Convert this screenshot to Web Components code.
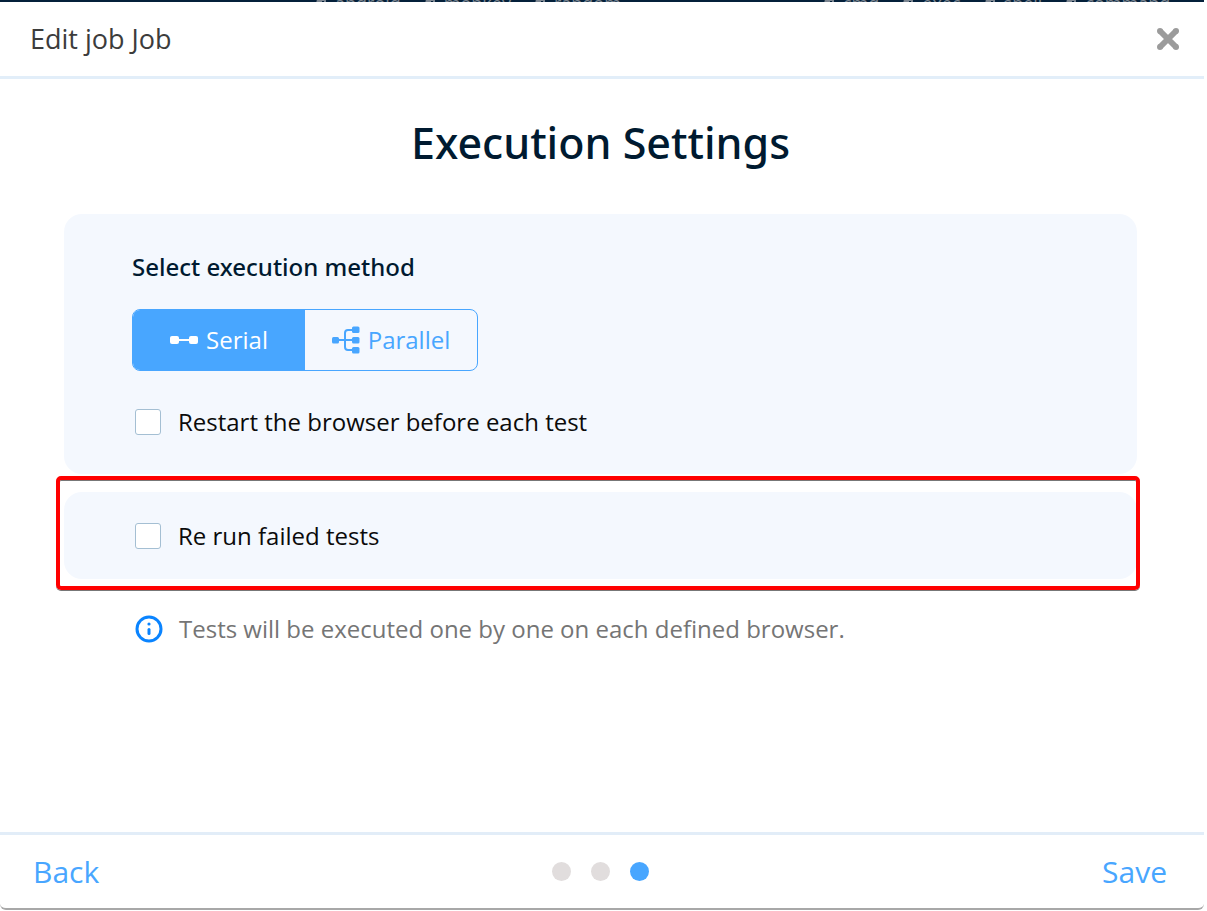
<!DOCTYPE html>
<html lang="en">
<head>
<meta charset="utf-8">
<meta name="viewport" content="width=device-width, initial-scale=1">
<title>Edit job</title>
<style>
  html, body { margin: 0; height: 100%; }
  body { font-family: "Open Sans", "Noto Sans", sans-serif; background: #fff; color: #0b0b0b; }
</style>
</head>
<body>
<job-page></job-page>
<script>
const define = (name, html, setup) => customElements.define(name, class extends HTMLElement {
  constructor() {
    super();
    const root = this.attachShadow({ mode: "open" });
    const t = document.createElement("template");
    t.innerHTML = html;
    root.append(t.content.cloneNode(true));
  }
  connectedCallback() { if (setup) setup(this.shadowRoot, this); }
});

define("tag-item", `
<style>
  :host { display: flex; align-items: flex-start; gap: 9px; }
  svg { width: 10px; height: 12px; margin-top: 8px; }
</style>
<svg viewBox="0 0 10 12" aria-hidden="true"><path d="M3 0h7v12H8V2H6v10H4V6a3 3 0 0 1-1-6z" fill="currentColor"/></svg><slot></slot>`);

define("tag-strip", `
<style>
  :host { display: grid; grid-template-columns: 508fr 380fr; height: 2px; overflow: hidden;
    background: #04203a; color: #7c8691; font-size: 18px; line-height: 24px; padding-left: 316px; }
  div { display: flex; gap: 24px; margin-top: -9px; }
</style>
<div><tag-item>android</tag-item><tag-item>monkey</tag-item><tag-item>random</tag-item></div>
<div><tag-item>cmd</tag-item><tag-item>exec</tag-item><tag-item>shell</tag-item><tag-item>command</tag-item></div>`);

define("modal-header", `
<style>
  :host { display: flex; align-items: center; justify-content: space-between; height: 74px;
    padding: 0 24px 0 30px; border-bottom: 3px solid #e2eef9; color: #3c3c3c; font-size: 27px; line-height: 36px; }
  h1 { margin: 0; font: inherit; }
  button { display: flex; padding: 0; border: 0; background: none; cursor: pointer; }
  svg { width: 24px; height: 24px; }
</style>
<h1><slot></slot></h1>
<button type="button" aria-label="Close"><svg viewBox="0 0 24 24"><path d="M4 4L20 20M20 4L4 20" stroke="#9b9b9b" stroke-width="6" stroke-linecap="butt" fill="none"/><path d="M4 4h.01M20 4h.01M4 20h.01M20 20h.01" stroke="#9b9b9b" stroke-width="6" stroke-linecap="round"/></svg></button>`);

define("check-field", `
<style>
  :host { display: block; font-size: 24px; line-height: 32px; }
  label { display: flex; align-items: center; gap: 17px; }
  input { appearance: none; box-sizing: border-box; width: 26px; height: 26px; margin: 0 0 0 3px;
    border: 1px solid #a4bfd3; border-radius: 3px; background: #fff; }
  input:checked { background: #48a6ff; }
</style>
<label><input type="checkbox"><span><slot></slot></span></label>`);

define("method-option", `
<style>
  :host { display: flex; flex: 1; }
  button { display: flex; flex: 1; align-items: center; justify-content: center; gap: 8px; padding: 0;
    border: 0; background: none; color: #48a6ff; font: inherit; cursor: pointer; }
  :host([active]) button { background: #48a6ff; color: #fff; }
</style>
<button type="button"><slot name="icon"></slot><slot></slot></button>`,
  (root, host) => root.querySelector("button").setAttribute("aria-pressed", host.hasAttribute("active")));

define("method-toggle", `
<style>
  :host { display: flex; box-sizing: border-box; width: 346px; height: 62px; overflow: hidden;
    border: 1px solid #48a6ff; border-radius: 8px; font-size: 24px; line-height: 32px; }
  svg { width: 28px; height: 28px; }
</style>
<method-option active>
  <svg slot="icon" viewBox="0 0 28 28" aria-hidden="true"><g fill="currentColor"><rect x="0" y="10" width="9" height="8" rx="2"/><rect x="19" y="10" width="9" height="8" rx="2"/><path d="M8 13h12v2H8z"/></g></svg>Serial</method-option>
<method-option>
  <svg slot="icon" viewBox="0 0 28 28" aria-hidden="true"><path d="M6 14h15M21 4h-5q-3 0-3 3v14q0 3 3 3h5" fill="none" stroke="currentColor" stroke-width="2"/><g fill="currentColor"><rect x="0" y="11" width="7" height="6.500" rx="1.500"/><rect x="20" y="0.500" width="7.500" height="6.500" rx="1.500"/><rect x="20" y="11" width="7.500" height="6.500" rx="1.500"/><rect x="20" y="21" width="7.500" height="6.500" rx="1.500"/></g></svg>Parallel</method-option>`);

define("settings-card", `
<style>
  :host { display: block; position: relative; padding: 36px 68px; border-radius: 18px; background: #f4f8fe; }
  :host([compact]) { padding: 28px 68px 27px; }
  :host([highlight])::after { content: ""; position: absolute; inset: -16px -3px -11px -8px;
    border: 4px solid #f00; border-radius: 5px; box-shadow: 0 1px 0 #777, inset 0 1px 0 #777; pointer-events: none; }
</style>
<slot></slot>`);

define("execution-settings", `
<style>
  :host { display: flex; flex-direction: column; padding: 34px 67px 34px 64px; }
  h2, h3 { color: #001a30; font-family: "Noto Sans", sans-serif; font-weight: 500; }
  h2 { margin: 0 0 41px; text-align: center; font-size: 43px; line-height: 60px; }
  h3 { margin: 0 0 25px; font-size: 24px; line-height: 34px; }
  method-toggle { margin-bottom: 35px; }
  settings-card + settings-card { margin-top: 18px; }
  p { display: flex; align-items: center; gap: 16px; margin: 34px 0 0 71px; color: #757575; font-size: 24px; line-height: 32px; }
  svg { flex: none; width: 28px; height: 28px; }
</style>
<h2>Execution Settings</h2>
<settings-card>
  <h3>Select execution method</h3>
  <method-toggle></method-toggle>
  <check-field>Restart the browser before each test</check-field>
</settings-card>
<settings-card compact highlight><check-field>Re run failed tests</check-field></settings-card>
<p><svg viewBox="0 0 28 28" aria-hidden="true"><circle cx="14" cy="14" r="12" fill="none" stroke="#0a84ff" stroke-width="3"/><path d="M14 14.500v4" stroke="#0a84ff" stroke-width="3" stroke-linecap="round"/><circle cx="14" cy="9" r="1.600" fill="#0a84ff"/></svg><span>Tests will be executed one by one on each defined browser.</span></p>`);

define("step-dots", `
<style>
  :host { display: flex; gap: 20px; }
  span { width: 19px; height: 19px; border-radius: 50%; background: #e1dddd; }
  .on { background: #48a6ff; }
</style>
<span></span><span></span><span class="on"></span>`);

define("modal-footer", `
<style>
  :host { display: grid; grid-template-columns: 1fr auto 1fr; align-items: center; height: 73px;
    padding: 0 37px 0 33px; border-top: 3px solid #e2edf8; }
  button { padding: 0; border: 0; background: none; color: #48a6ff; font: inherit; font-size: 30px; line-height: 40px; cursor: pointer; justify-self: start; }
  .save { justify-self: end; }
</style>
<button type="button">Back</button><step-dots></step-dots><button class="save" type="button">Save</button>`);

define("job-page", `
<style>
  :host { display: grid; grid-template-rows: auto 1fr; box-sizing: border-box; min-height: 100vh; padding: 0 3px 1px 0; }
  section { display: flex; flex-direction: column; border-radius: 6px; background: #fff; border-bottom: 2px solid #a8a8a8; }
  execution-settings { flex: 1; }
</style>
<tag-strip></tag-strip>
<section role="dialog" aria-label="Edit job">
  <modal-header>Edit job Job</modal-header>
  <execution-settings></execution-settings>
  <modal-footer></modal-footer>
</section>`);
</script>
</body>
</html>
